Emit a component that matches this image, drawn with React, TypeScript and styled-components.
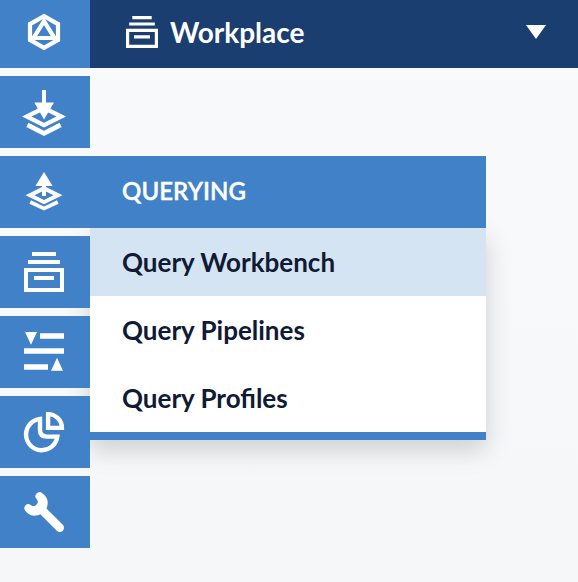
import React from 'react';
import styled, { createGlobalStyle } from 'styled-components';

const GlobalStyle = createGlobalStyle`
  * { box-sizing: border-box; }
  body {
    margin: 0;
    background: #f8f9fb;
    font-family: Lato, sans-serif;
    overflow: hidden;
  }
`;

const Page = styled.div`
  width: 578px;
  height: 582px;
  background: linear-gradient(#f9fafc, #f5f7f9);
`;

const TopBar = styled.header`
  display: flex;
  height: 68px;
  background: #1b3e70;
  color: #fff;
`;

const Tile = styled.div<{ $short?: boolean }>`
  position: relative;
  z-index: 1;
  width: 90px;
  height: ${(p) => (p.$short ? 68 : 72)}px;
  flex: none;
  background: #4081c7;

  svg { display: block; }
`;

const Workspace = styled.div`
  display: flex;
  align-items: center;
  flex: 1;
  padding: 0 32px 0 36px;
`;

const Title = styled.span`
  flex: 1;
  margin-left: 12px;
  padding-bottom: 5px;
  font-size: 28px;
  line-height: 32px;
  font-weight: 700;
`;

const Sidebar = styled.nav`
  display: flex;
  flex-direction: column;
  gap: 8px;
  padding-top: 8px;
  isolation: isolate;
`;

const Entry = styled.div`
  display: flex;
  height: 72px;
`;

const Flyout = styled.section`
  width: 396px;
  height: 284px;
`;

const FlyoutHeading = styled.h2`
  position: relative;
  z-index: 1;
  display: flex;
  align-items: center;
  height: 72px;
  margin: 0;
  padding: 0 32px 2px;
  background: #4081c7;
  color: #fff;
  font-size: 24px;
  line-height: 32px;
  font-weight: 600;
  letter-spacing: 0.08px;
  -webkit-text-stroke: 0.4px #fff;
`;

const Menu = styled.ul`
  margin: 0;
  padding: 0;
  list-style: none;
  background: #fff;
  border-bottom: 8px solid #4081c7;
  box-shadow: 0 10px 24px rgba(0, 0, 0, 0.17);
`;

const MenuItem = styled.li<{ $active?: boolean }>`
  display: flex;
  align-items: center;
  height: 68px;
  padding: 0 32px;
  background: ${(p) => (p.$active ? '#d5e4f3' : '#fff')};
  color: #101a35;
  font-size: 26px;
  line-height: 32px;
  font-weight: 700;
`;

const TileIcon = ({ height = 72, children }: { height?: number; children: React.ReactNode }) => (
  <svg width="90" height={height} viewBox={`0 0 90 ${height}`} fill="#fff">
    {children}
  </svg>
);

const LogoIcon = () => (
  <TileIcon height={68}>
    <g fill="none" stroke="#fff" strokeWidth="4.2">
      <path d="M44 16.2 58 24.1V39.9L44 47.8 30 39.9V24.1Z" />
      <path d="M44 21.2 54.4 38H33.6Z" />
    </g>
  </TileIcon>
);

const IndexingIcon = () => (
  <TileIcon>
    <path d="M42 14h4v12.5h8L44 43.5 34.3 26.5H42Z" />
    <path fillRule="evenodd" d="M22 40.5 44 29.5 66 40.5 44 51.5ZM31.5 40.5 44 46.8 56.5 40.5 44 34.5Z" />
    <path d="M28.5 46.8 44 54.7 59.5 46.8 61.8 51 44 60 26.2 51Z" />
  </TileIcon>
);

const QueryingIcon = () => (
  <TileIcon>
    <path d="M44 16 52.6 30H46V40H42V30H35.4Z" />
    <path fillRule="evenodd" d="M25.5 39.2 44 30 62.5 39.2 44 48.2ZM34.5 39.2 44 44 53.5 39.2 44 34.5Z" />
    <path d="M31 44.3 44 50.6 57 44.3 58.6 47.8 44 54.5 29.4 47.8Z" />
  </TileIcon>
);

const ArchiveIcon = () => (
  <TileIcon>
    <path d="M32 16H56V20H32ZM28 24H60V28H28ZM34 40H54V44H34Z" />
    <path fillRule="evenodd" d="M24 32H64V56H24ZM28 36V52H60V36Z" />
  </TileIcon>
);

const RelevanceIcon = () => (
  <TileIcon>
    <path d="M25 16H37L31 28.8ZM51 54.7H63L57 41.7Z" />
    <path d="M40 17.3H64V22.7H40ZM24 32.3H64V37.7H24ZM24 48.3H48V53.7H24Z" />
  </TileIcon>
);

const AnalyticsIcon = () => (
  <TileIcon>
    <g fill="none" stroke="#fff" strokeWidth="4.4">
      <path d="M40 22.9V34Q40 40.6 47 40.6H57.3A15.7 15.7 0 1 1 40 22.9Z" />
      <path d="M48.1 18.1V31.9H61.9A13.8 13.8 0 0 0 48.1 18.1Z" />
    </g>
  </TileIcon>
);

const WrenchIcon = () => (
  <TileIcon>
    <path d="M42.3 17.2C46 20 47.9 23 47.7 27 47.6 35 41 39.7 34 39.7 30 39.6 27 37 24.8 34A4 4 0 0 1 30 28.5C32 30.3 34 30.5 35.5 29.5 38 27.5 38.5 26 36.8 23.2A4 4 0 0 1 42.3 17.2Z" />
    <path stroke="#fff" strokeLinecap="round" strokeWidth="8.4" d="M42 34 59.8 51.8" />
  </TileIcon>
);

const entries = [
  { name: 'indexing', Icon: IndexingIcon },
  { name: 'querying', Icon: QueryingIcon },
  { name: 'archive', Icon: ArchiveIcon },
  { name: 'relevance', Icon: RelevanceIcon },
  { name: 'analytics', Icon: AnalyticsIcon },
  { name: 'system', Icon: WrenchIcon },
];

const queryItems = ['Query Workbench', 'Query Pipelines', 'Query Profiles'];

export default function App() {
  return (
    <Page>
      <GlobalStyle />
      <TopBar>
        <Tile $short>
          <LogoIcon />
        </Tile>
        <Workspace>
          <svg width="32" height="68" viewBox="0 0 32 68" fill="#fff">
            <path d="M6.3 16H25.7V19.2H6.3ZM3.2 22.4H28.8V25.6H3.2ZM8 35.2H24V38.4H8Z" />
            <path fillRule="evenodd" d="M0 28.8H32V48H0ZM3.2 32V44.8H28.8V32Z" />
          </svg>
          <Title>Workplace</Title>
          <svg width="20" height="68" viewBox="0 0 20 68" fill="#fff">
            <path d="M0 25H20L10 39Z" />
          </svg>
        </Workspace>
      </TopBar>
      <Sidebar>
        {entries.map(({ name, Icon }) => (
          <Entry key={name}>
            <Tile>
              <Icon />
            </Tile>
            {name === 'querying' && (
              <Flyout>
                <FlyoutHeading>QUERYING</FlyoutHeading>
                <Menu>
                  {queryItems.map((item, i) => (
                    <MenuItem key={item} $active={i === 0}>
                      {item}
                    </MenuItem>
                  ))}
                </Menu>
              </Flyout>
            )}
          </Entry>
        ))}
      </Sidebar>
    </Page>
  );
}
